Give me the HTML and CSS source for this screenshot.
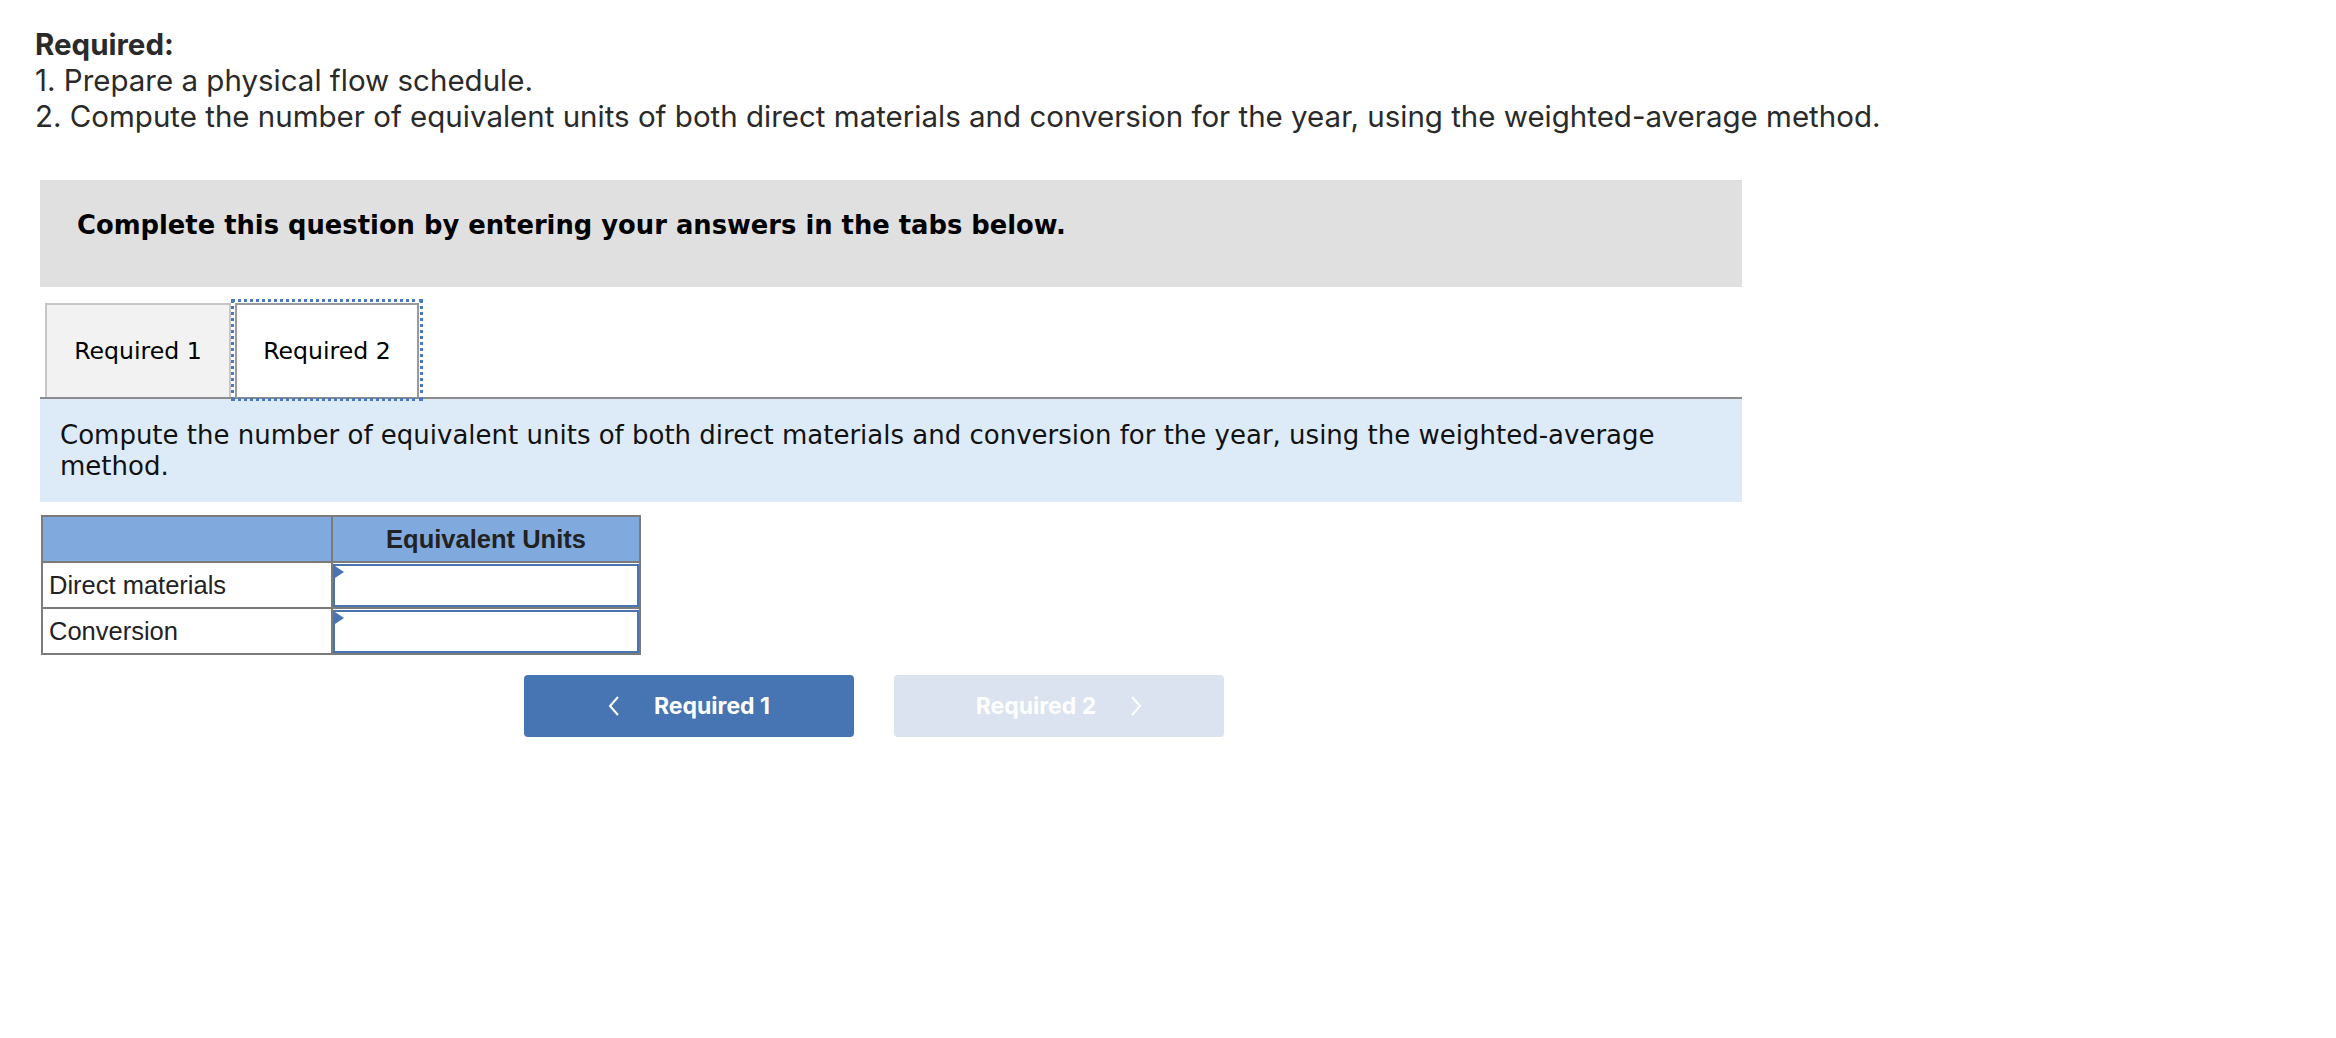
FILE: index.html
```html
<!DOCTYPE html>
<html lang="en">
<head>
<meta charset="utf-8">
<title>Required</title>
<link rel="stylesheet" href="styles.css">
</head>
<body>
<div class="page">
  <div class="req">
    <div class="req-title">Required:</div>
    <div>1. Prepare a physical flow schedule.</div>
    <div>2. Compute the number of equivalent units of both direct materials and conversion for the year, using the weighted-average method.</div>
  </div>
  <div class="qwrap">
    <div class="banner">Complete this question by entering your answers in the tabs below.</div>
    <div class="tabs">
      <div class="tab">Required 1</div>
      <div class="tab active">Required 2</div>
    </div>
    <div class="prompt">Compute the number of equivalent units of both direct materials and conversion for the year, using the weighted-average method.</div>
    <table class="grid">
      <tr class="head"><th class="corner"></th><th>Equivalent Units</th></tr>
      <tr><td class="label">Direct materials</td><td class="entry"><div class="field"><span class="mark"></span></div></td></tr>
      <tr><td class="label">Conversion</td><td class="entry"><div class="field"><span class="mark"></span></div></td></tr>
    </table>
    <div class="nav">
      <button class="navbtn prev">
        <svg class="chev" width="12" height="20" viewBox="0 0 12 20"><polyline points="10,1 2,10 10,19" fill="none" stroke="#fff" stroke-width="2"/></svg>
        <span>Required 1</span>
      </button>
      <button class="navbtn next">
        <span>Required 2</span>
        <svg class="chev" width="12" height="20" viewBox="0 0 12 20"><polyline points="2,1 10,10 2,19" fill="none" stroke="#fff" stroke-width="2"/></svg>
      </button>
    </div>
  </div>
</div>
</body>
</html>
```
FILE: styles.css
```css
html, body {
  margin: 0;
  padding: 0;
  background: #fff;
}

.page {
  padding-top: 26px;
}

.req {
  padding-left: 35px;
  font-family: "Inter", "Liberation Sans", sans-serif;
  font-size: 29.5px;
  line-height: 36px;
  color: #2a2a2a;
}

.req-title {
  font-weight: 700;
}

.qwrap {
  margin-top: 46px;
  margin-left: 40px;
  width: 1702px;
}

.banner {
  background: #e0e0e0;
  height: 107px;
  box-sizing: border-box;
  padding: 30px 0 0 37px;
  font-family: "DejaVu Sans", Verdana, sans-serif;
  font-weight: 700;
  font-size: 25.8px;
  line-height: 30px;
  color: #000;
}

.tabs {
  display: flex;
  margin-top: 16px;
  padding-left: 5px;
  border-bottom: 2px solid #8c8c8c;
}

.tab {
  width: 186px;
  height: 94px;
  box-sizing: border-box;
  display: flex;
  align-items: center;
  justify-content: center;
  background: #f2f2f2;
  border: 2px solid #c6c6c6;
  border-bottom: none;
  font-family: "DejaVu Sans", Verdana, sans-serif;
  font-size: 23.6px;
  color: #000;
}

.tab.active {
  width: 184px;
  margin-left: 4px;
  background: #fff;
  border-color: #9a9a9a;
  outline: 3px dotted #4a78c2;
  outline-offset: 1px;
}

.prompt {
  background: #ddebf8;
  padding: 21px 40px 20px 20px;
  font-family: "DejaVu Sans", Verdana, sans-serif;
  font-size: 26px;
  line-height: 31px;
  color: #111;
}

.grid {
  margin-top: 13px;
  margin-left: 1px;
  border-collapse: collapse;
  width: 600px;
  font-family: "Liberation Sans", Arial, sans-serif;
  font-size: 25.5px;
  color: #222;
}

.grid th,
.grid td {
  border: 2px solid #7b7b7b;
  padding: 0;
  height: 44px;
}

.grid th.corner {
  width: 288px;
}

.grid .head th {
  background: #80aadd;
  font-weight: 700;
  text-align: center;
}

.grid td.label {
  width: 282px;
  padding-left: 6px;
  text-align: left;
}

.grid td.entry {
  padding: 0;
}

.field {
  position: relative;
  height: 43px;
  border: 2px solid #4a73b1;
  box-sizing: border-box;
  background: #fff;
}

.mark {
  position: absolute;
  top: 0;
  left: 0;
  width: 0;
  height: 0;
  border-left: 9px solid #4a73b1;
  border-top: 6px solid transparent;
  border-bottom: 6px solid transparent;
}

.nav {
  display: flex;
  gap: 40px;
  margin-top: 20px;
  padding-left: 484px;
}

.navbtn {
  width: 330px;
  height: 62px;
  border: none;
  border-radius: 4px;
  display: flex;
  align-items: center;
  justify-content: center;
  gap: 34px;
  font-family: "Inter", "Roboto", sans-serif;
  font-weight: 700;
  font-size: 23px;
  color: #fff;
  padding: 0;
}

.navbtn.prev {
  background: #4775b3;
}

.navbtn.next {
  background: #dae3ef;
}
```
